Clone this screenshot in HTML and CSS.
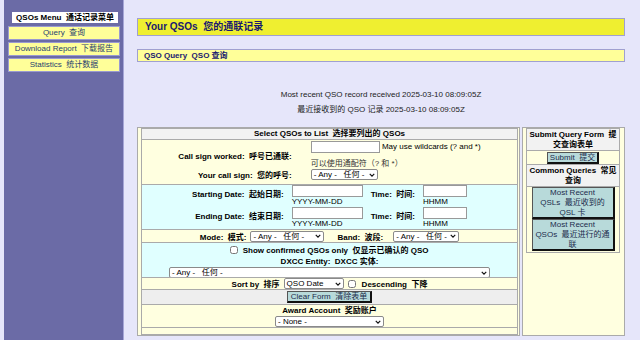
FILE: index.html
```html
<!doctype html>
<html>
<head>
  <title>Your QSOs</title>
  <link rel="stylesheet" href="styles.css">
</head>
<body>
  <div class="page">
    <div class="sidebar">
      <div class="menu">
        <div class="menu-head">QSOs Menu&nbsp; 通话记录菜单</div>
        <a class="menu-item" href="#">Query&nbsp; 查询</a>
        <a class="menu-item" href="#">Download Report&nbsp; 下载报告</a>
        <a class="menu-item" href="#">Statistics&nbsp; 统计数据</a>
      </div>
    </div>

    <div class="main">
      <h1 class="title">Your QSOs&nbsp; 您的通联记录</h1>
      <h2 class="subtitle">QSO Query&nbsp; QSO 查询</h2>
      <p class="recent">Most recent QSO record received 2025-03-10 08:09:05Z<br>最近接收到的 QSO 记录 2025-03-10 08:09:05Z</p>

      <form class="query">
        <div class="panel left">
          <div class="rows">
            <div class="row head">Select QSOs to List&nbsp; 选择要列出的 QSOs</div>

            <div class="row yellow callsign">
              <div class="grid two">
                <label class="lbl">Call sign worked:&nbsp; 呼号已通联:</label>
                <div class="ctl">
                  <div><input type="text" class="txt call"> May use wildcards (? and *)</div>
                  <div class="hint">可以使用通配符（? 和 *）</div>
                </div>
                <label class="lbl">Your call sign:&nbsp; 您的呼号:</label>
                <div class="ctl">
                  <span class="sel own"><span>- Any -&nbsp;&nbsp; 任何 -</span><svg class="chev" viewBox="0 0 8 5"><path d="M1 1l3 3 3-3"/></svg></span>
                </div>
              </div>
            </div>

            <div class="row cyan dates">
              <div class="grid four">
                <label class="lbl">Starting Date:&nbsp; 起始日期:</label>
                <div class="stack"><input type="text" class="txt date"><span>YYYY-MM-DD</span></div>
                <label class="lbl">Time:&nbsp; 时间:</label>
                <div class="stack"><input type="text" class="txt time"><span>HHMM</span></div>
                <label class="lbl">Ending Date:&nbsp; 结束日期:</label>
                <div class="stack"><input type="text" class="txt date"><span>YYYY-MM-DD</span></div>
                <label class="lbl">Time:&nbsp; 时间:</label>
                <div class="stack"><input type="text" class="txt time"><span>HHMM</span></div>
              </div>
            </div>

            <div class="row yellow mode">
              <label class="lbl">Mode:&nbsp; 模式:</label>
              <span class="sel mode-sel"><span>- Any -&nbsp;&nbsp; 任何 -</span><svg class="chev" viewBox="0 0 8 5"><path d="M1 1l3 3 3-3"/></svg></span>
              <label class="lbl band">Band:&nbsp; 波段:</label>
              <span class="sel band-sel"><span>- Any -&nbsp;&nbsp; 任何 -</span><svg class="chev" viewBox="0 0 8 5"><path d="M1 1l3 3 3-3"/></svg></span>
            </div>

            <div class="row cyan dxcc">
              <div class="line"><input type="checkbox" class="chk"> <b>Show confirmed QSOs only&nbsp; 仅显示已确认的 QSO</b></div>
              <div class="line"><b>DXCC Entity:&nbsp; DXCC 实体:</b></div>
              <span class="sel dxcc-sel"><span>- Any -&nbsp;&nbsp; 任何 -</span><svg class="chev" viewBox="0 0 8 5"><path d="M1 1l3 3 3-3"/></svg></span>
            </div>

            <div class="row yellow sort">
              <label class="lbl">Sort by&nbsp; 排序</label>
              <span class="sel sort-sel"><span>QSO Date</span><svg class="chev" viewBox="0 0 8 5"><path d="M1 1l3 3 3-3"/></svg></span>
              <input type="checkbox" class="chk">
              <label class="lbl">Descending&nbsp; 下降</label>
            </div>

            <div class="row grey clear">
              <button type="reset" class="btn">Clear Form&nbsp; 清除表单</button>
            </div>

            <div class="row yellow award">
              <div class="line"><b>Award Account&nbsp; 奖励账户</b></div>
              <span class="sel award-sel"><span>- None -</span><svg class="chev" viewBox="0 0 8 5"><path d="M1 1l3 3 3-3"/></svg></span>
            </div>

            <div class="row yellow empty"></div>
          </div>
        </div>

        <div class="panel right">
          <div class="rows side">
            <div class="row head tall">Submit Query Form&nbsp; 提交查询表单</div>
            <div class="row yellow submit"><button type="submit" class="btn">Submit&nbsp; 提交</button></div>
            <div class="row head tall">Common Queries&nbsp; 常见查询</div>
            <div class="row yellow common">
              <button type="button" class="btn big">Most Recent<br>QSLs&nbsp; 最近收到的<br>QSL 卡</button>
              <button type="button" class="btn big">Most Recent<br>QSOs&nbsp; 最近进行的通<br>联</button>
            </div>
          </div>
        </div>
      </form>
    </div>
  </div>
</body>
</html>
```

FILE: styles.css
```css
html, body {
  margin: 0;
  padding: 0;
}

body {
  background: #e6e6fa;
  font-family: "Liberation Sans", "Noto Sans CJK SC", sans-serif;
  font-size: 8px;
  color: #000;
}

.page {
  display: flex;
  height: 340px;
  overflow: hidden;
}

/* left menu column */
.sidebar {
  margin-left: 4px;
  width: 120px;
  background: #6b6ba6;
  border-right: 1px solid #a6a6d6;
  padding-top: 12px;
  box-sizing: border-box;
}

.menu {
  display: flex;
  flex-direction: column;
  gap: 2px;
  margin: 0 3px 0 4px;
}

.menu-head {
  background: #fff;
  margin: 0 2px 1px 4px;
  height: 11px;
  line-height: 11px;
  text-align: center;
  font-weight: bold;
}

.menu-item {
  display: block;
  background: #ffff99;
  border: 1px solid #9a9ad0;
  height: 12px;
  line-height: 12px;
  text-align: center;
  color: #1f3f6f;
  text-decoration: none;
}

/* content */
.main {
  margin-left: 13px;
  width: 488px;
}

.title {
  margin: 18px 0 0;
  height: 16px;
  line-height: 16px;
  padding-left: 7px;
  background: #efef30;
  border: 1px solid #a0a0d0;
  font-size: 10px;
  color: #191970;
}

.subtitle {
  margin: 13px 0 0;
  height: 11px;
  line-height: 11px;
  padding-left: 6px;
  background: #ffff99;
  border: 1px solid #a0a0d0;
  font-size: 8px;
  color: #191970;
}

.recent {
  margin: 25px 0 0;
  line-height: 15px;
  text-align: center;
  color: #222;
}

.query {
  margin-top: 10px;
  display: flex;
  gap: 2px;
  height: 209px;
}

.panel {
  background: #ffffe0;
  border: 1px solid #aaa;
  box-sizing: border-box;
}

.panel.left {
  width: 383px;
  padding: 0 1px 0 3px;
}

.panel.right {
  width: 103px;
  padding: 0 4px 0 3px;
}

.rows {
  border: 1px solid #aaa;
  border-top: 0;
  height: 207px;
  box-sizing: border-box;
  display: flex;
  flex-direction: column;
}

.rows.side {
  height: auto;
}

.row {
  border-top: 1px solid #aaa;
  box-sizing: border-box;
}

.row.head {
  background: #f2f2f2;
  text-align: center;
  font-weight: bold;
  height: 11px;
  line-height: 10px;
}

.row.head.tall {
  height: 22px;
  line-height: 10px;
  padding: 1px 2px 0;
  overflow: hidden;
}

.yellow { background: #ffffe0; }
.cyan { background: #e0ffff; }
.grey { background: #eeeeee; }

.lbl {
  font-weight: bold;
  white-space: nowrap;
}

.grid {
  display: grid;
  justify-content: center;
  align-items: center;
}

.grid.two {
  grid-template-columns: auto auto;
  column-gap: 19px;
}

.grid.two .lbl {
  text-align: right;
}

.callsign {
  height: 45px;
  padding-top: 1px;
}

.callsign .hint {
  margin-top: 5px;
  color: #333;
}

.callsign .ctl {
  line-height: 11px;
}

.grid.four {
  grid-template-columns: auto auto auto auto;
  column-gap: 8px;
  row-gap: 0;
  align-items: start;
}

.grid.four .lbl {
  text-align: right;
  margin-top: 3px;
}

.dates {
  height: 45px;
}

.stack {
  display: flex;
  flex-direction: column;
  line-height: 10px;
}

.txt {
  height: 12px;
  box-sizing: border-box;
  border: 1px solid #999;
  padding: 0 2px;
  font: inherit;
  background: #fff;
  margin: 0;
  vertical-align: middle;
}

.txt.call { width: 69px; }
.txt.date { width: 71px; }
.txt.time { width: 44px; }

/* drop-down boxes */
.sel {
  display: inline-flex;
  align-items: center;
  justify-content: space-between;
  height: 11px;
  box-sizing: border-box;
  padding: 0 2px 0 2px;
  border: 1px solid #8a8a8a;
  border-radius: 2px;
  background: #fff;
  white-space: nowrap;
  line-height: 9px;
  vertical-align: middle;
}

.chev {
  width: 6px;
  height: 4px;
  flex: none;
}

.chev path {
  fill: none;
  stroke: #111;
  stroke-width: 1.6;
}

.sel.own { width: 67px; }
.sel.mode-sel { width: 74px; }
.sel.band-sel { width: 66px; }
.sel.dxcc-sel { width: 321px; }
.sel.sort-sel { width: 60px; }
.sel.award-sel { width: 109px; }

.mode {
  height: 13px;
  display: flex;
  justify-content: center;
  align-items: center;
  gap: 4px;
}

.mode .band {
  margin-left: 9px;
  margin-right: 6px;
}

.dxcc {
  height: 35px;
  display: flex;
  flex-direction: column;
  align-items: center;
  padding-top: 2px;
}

.dxcc .line {
  line-height: 11px;
}

.chk {
  width: 8px;
  height: 8px;
  margin: 0 2px 0 0;
  vertical-align: -1px;
}

.sort {
  height: 12px;
  display: flex;
  justify-content: center;
  align-items: center;
  gap: 4px;
}

.clear {
  height: 15px;
  display: flex;
  justify-content: center;
  align-items: center;
}

.btn {
  font: inherit;
  font-size: 8px;
  color: #1c2c4c;
  background: #b8dada;
  border-style: solid;
  border-color: #555 #111 #111 #555;
  border-width: 1px 2px 2px 1px;
  padding: 0 3px;
  height: 12px;
  line-height: 9px;
  margin: 0;
  white-space: nowrap;
}

.award {
  height: 23px;
  display: flex;
  flex-direction: column;
  align-items: center;
  padding-top: 1px;
}

.award .line {
  line-height: 10px;
}

.empty {
  flex: 1;
}

.submit {
  height: 14px;
  display: flex;
  justify-content: center;
  align-items: center;
}

.submit .btn {
  padding: 0 2px;
}

.common {
  display: flex;
  flex-direction: column;
  align-items: center;
  padding: 0 0 1px;
}

.btn.big {
  width: 83px;
  height: 32px;
  line-height: 10px;
  padding: 0;
  white-space: normal;
}
```
